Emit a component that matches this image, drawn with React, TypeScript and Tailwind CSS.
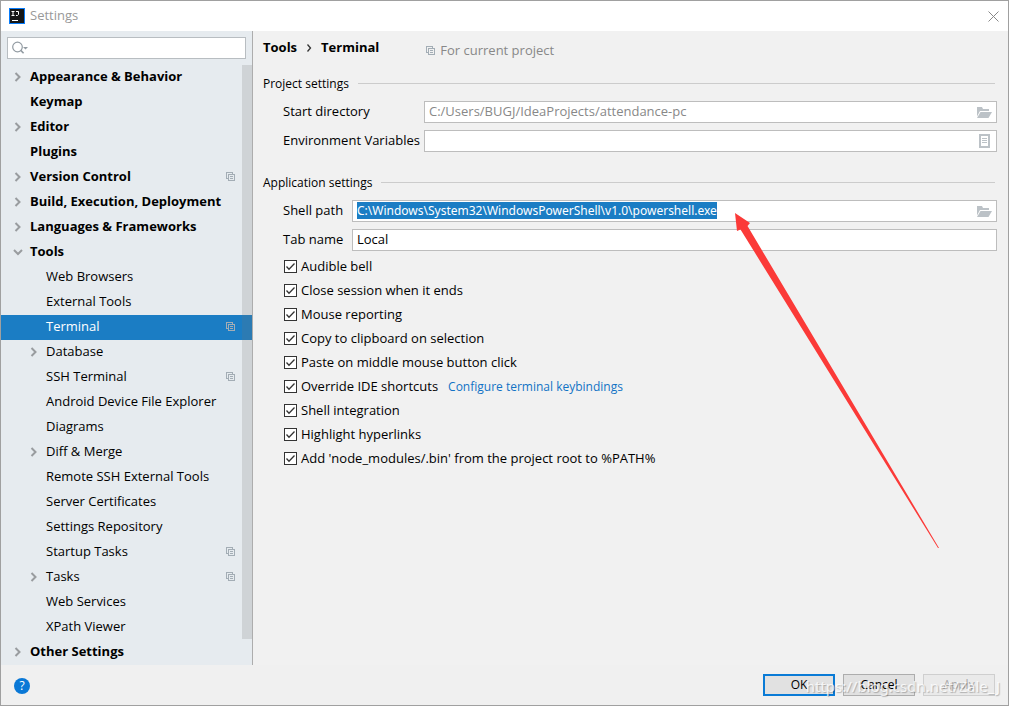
import { useEffect, useRef, useState } from "react";

type TreeItem = {
  label: string;
  level: 0 | 1;
  arrow?: "right" | "down";
  project?: boolean;
};

const treeItems: TreeItem[] = [
  { label: "Appearance & Behavior", level: 0, arrow: "right" },
  { label: "Keymap", level: 0 },
  { label: "Editor", level: 0, arrow: "right" },
  { label: "Plugins", level: 0 },
  { label: "Version Control", level: 0, arrow: "right", project: true },
  { label: "Build, Execution, Deployment", level: 0, arrow: "right" },
  { label: "Languages & Frameworks", level: 0, arrow: "right" },
  { label: "Tools", level: 0, arrow: "down" },
  { label: "Web Browsers", level: 1 },
  { label: "External Tools", level: 1 },
  { label: "Terminal", level: 1, project: true },
  { label: "Database", level: 1, arrow: "right" },
  { label: "SSH Terminal", level: 1, project: true },
  { label: "Android Device File Explorer", level: 1 },
  { label: "Diagrams", level: 1 },
  { label: "Diff & Merge", level: 1, arrow: "right" },
  { label: "Remote SSH External Tools", level: 1 },
  { label: "Server Certificates", level: 1 },
  { label: "Settings Repository", level: 1 },
  { label: "Startup Tasks", level: 1, project: true },
  { label: "Tasks", level: 1, arrow: "right", project: true },
  { label: "Web Services", level: 1 },
  { label: "XPath Viewer", level: 1 },
  { label: "Other Settings", level: 0, arrow: "right" },
];

const options = [
  "Audible bell",
  "Close session when it ends",
  "Mouse reporting",
  "Copy to clipboard on selection",
  "Paste on middle mouse button click",
  "Override IDE shortcuts",
  "Shell integration",
  "Highlight hyperlinks",
  "Add 'node_modules/.bin' from the project root to %PATH%",
];

const inputClass =
  "block h-[22px] w-full border border-[#bdbdbd] bg-white pr-7 pb-[2px] pl-1 leading-[17px] outline-none selection:bg-[#1b7dc4] selection:text-white";

const Chevron = ({ direction }: { direction: "right" | "down" }) => (
  <svg width="10" height="10" viewBox="0 0 10 10" fill="none" stroke="#999c9f" strokeWidth="2">
    {direction === "right" ? <path d="M2.5 1 L6.5 5 L2.5 9" /> : <path d="M1 3 L5 7 L9 3" />}
  </svg>
);

const ProjectIcon = () => (
  <svg width="10" height="10" viewBox="0 0 10 10" fill="none" stroke="#a3adb5" shapeRendering="crispEdges">
    <path d="M2 6.5 H0.5 V0.5 H6.5 V2" />
    <path d="M2.5 2.5 H8.5 V8.5 H2.5 Z" />
    <path d="M4 4.5 H7 M4 6.5 H7" />
  </svg>
);

const FolderIcon = () => (
  <svg width="16" height="12" viewBox="0 0 16 12" fill="#bcc2c7">
    <path d="M1 0 H6 L7 2 H13 V4 H4 L1 9.5 Z" />
    <path d="M4.5 5 H16 L12.5 11 H1 Z" />
  </svg>
);

const ListIcon = () => (
  <svg width="16" height="14" viewBox="0 0 16 14" fill="none" stroke="#bcc2c7" shapeRendering="crispEdges">
    <rect x="4" y="1" width="9" height="12" strokeWidth="2" />
    <path d="M6 4.5 H11 M6 6.5 H11 M6 8.5 H11" />
  </svg>
);

const GroupTitle = ({ children }: { children: string }) => (
  <h2 className="flex h-4 items-center gap-[9px] text-[12px]">
    <span className="pt-[2px] leading-4">{children}</span>
    <span className="mr-[2px] h-px flex-1 bg-[#cccccc]" />
  </h2>
);

const App = () => {
  const [selected, setSelected] = useState("Terminal");
  const [startDir, setStartDir] = useState("C:/Users/BUGJ/IdeaProjects/attendance-pc");
  const [env, setEnv] = useState("");
  const [shellPath, setShellPath] = useState("C:\\Windows\\System32\\WindowsPowerShell\\v1.0\\powershell.exe");
  const [tabName, setTabName] = useState("Local");
  const shellRef = useRef<HTMLInputElement>(null);

  // Shell path gets the focus with its whole text selected
  useEffect(() => {
    shellRef.current?.focus();
    shellRef.current?.select();
  }, []);

  return (
    <div className="flex min-h-screen flex-col border border-[#a0a0a0] bg-[#f0f0f0] font-['Open_Sans','Noto_Sans',sans-serif] text-[13px] text-black">
      <header className="flex h-[30px] items-center bg-white px-2">
        <svg width="16" height="16" viewBox="0 0 16 16">
          <rect width="16" height="16" fill="#087cfa" />
          <rect x="1" y="1" width="14" height="14" fill="#161616" />
          <path d="M2.5 3.5 H5.5 M4 3.5 V7.5 M2.5 7.5 H5.5 M7 3.5 H9.5 V6.5 L8.5 7.5 H7 M3 12.5 H9" fill="none" stroke="#fff" />
        </svg>
        <h1 className="ml-[5px] flex-1 text-[13px] text-[#999999]">Settings</h1>
        <button type="button" aria-label="Close" className="mr-px">
          <svg width="11" height="11" viewBox="0 0 11 11" stroke="#888888">
            <path d="M0.5 0.5 L10.5 10.5 M10.5 0.5 L0.5 10.5" />
          </svg>
        </button>
      </header>

      <div className="flex flex-1">
        <aside className="w-[252px] shrink-0 border-r border-[#adadad] bg-[#e6ebef]">
          <div className="mx-[6px] my-[6px] flex h-[22px] items-center border border-[#b8bdc1] bg-white pl-1">
            <svg width="17" height="14" viewBox="0 0 17 14" fill="none" stroke="#929ba2">
              <circle cx="5.5" cy="6" r="4.8" strokeWidth="1.2" />
              <path d="M8.8 9.4 L11.6 12.2" strokeWidth="1.6" />
              <path d="M11 6 H16 L13.5 8.5 Z" fill="#929ba2" stroke="none" />
            </svg>
            <input type="text" aria-label="Search settings" className="min-w-0 flex-1 bg-transparent px-1 outline-none" />
          </div>
          <nav className="relative">
            {treeItems.map((item) => {
              const active = item.label === selected;
              return (
                <button
                  key={item.label}
                  type="button"
                  onClick={() => setSelected(item.label)}
                  className={`flex h-[25px] w-full items-center pr-4 pb-[2px] text-left ${item.level ? "pl-[28px]" : "pl-3 font-bold"} ${active ? "bg-[#1b7dc4] text-white" : ""}`}
                >
                  <span className="flex w-[17px] shrink-0">{item.arrow && <Chevron direction={item.arrow} />}</span>
                  <span className="flex-1 whitespace-nowrap">{item.label}</span>
                  {item.project && <ProjectIcon />}
                </button>
              );
            })}
            <div className="absolute top-0 right-0 bottom-[26px] w-[10px] bg-[#737373]/20" />
          </nav>
        </aside>

        <main className="relative min-w-0 flex-1 bg-[#f1f1f1] pr-[11px] pl-[10px]">
          <div className="flex h-[34px] items-center font-bold">
            <span>Tools</span>
            <svg className="mx-2" width="8" height="8" viewBox="0 0 8 8" fill="none" stroke="#333333" strokeWidth="1.3">
              <path d="M2.5 0.5 L5.5 4 L2.5 7.5" />
            </svg>
            <span>Terminal</span>
            <span className="mt-[6px] ml-[47px] flex items-center gap-1 font-normal text-[#888888]">
              <ProjectIcon />
              For current project
            </span>
          </div>

          <section className="mt-[10px]">
            <GroupTitle>Project settings</GroupTitle>
            <div className="mt-[10px] grid grid-cols-[141px_1fr] items-center gap-y-[7px] pl-5">
              <label htmlFor="start-dir">Start directory</label>
              <div className="relative">
                <input id="start-dir" className={`${inputClass} text-[#888888]`} value={startDir} onChange={(e) => setStartDir(e.target.value)} />
                <button type="button" aria-label="Browse start directory" className="absolute top-[6px] right-[5px]">
                  <FolderIcon />
                </button>
              </div>
              <label htmlFor="env">Environment Variables</label>
              <div className="relative">
                <input id="env" className={inputClass} value={env} onChange={(e) => setEnv(e.target.value)} />
                <button type="button" aria-label="Edit variables" className="absolute top-1 right-[5px]">
                  <ListIcon />
                </button>
              </div>
            </div>
          </section>

          <section className="mt-[22px]">
            <GroupTitle>Application settings</GroupTitle>
            <div className="mt-[10px] grid grid-cols-[69px_1fr] items-center gap-y-[7px] pl-5">
              <label htmlFor="shell-path">Shell path</label>
              <div className="relative">
                <input
                  id="shell-path"
                  ref={shellRef}
                  className={`${inputClass} font-['Noto_Sans',sans-serif] text-[12px]`}
                  value={shellPath}
                  onChange={(e) => setShellPath(e.target.value)}
                />
                <button type="button" aria-label="Browse shell path" className="absolute top-[6px] right-[5px]">
                  <FolderIcon />
                </button>
              </div>
              <label htmlFor="tab-name">Tab name</label>
              <input id="tab-name" className={inputClass} value={tabName} onChange={(e) => setTabName(e.target.value)} />
            </div>
            <ul className="mt-1 pl-[21px]">
              {options.map((option) => (
                <li key={option} className="flex h-6 items-center">
                  <label className="flex items-center gap-1">
                    <span className="relative mb-px flex">
                      <input type="checkbox" defaultChecked className="peer size-[13px] appearance-none border border-[#333333] bg-white" />
                      <svg className="pointer-events-none absolute inset-0 hidden peer-checked:block" width="13" height="13" viewBox="0 0 13 13" fill="none" stroke="#333333" strokeWidth="1.3">
                        <path d="M2.5 6.5 L5 9.2 L10.5 3.5" />
                      </svg>
                    </span>
                    {option}
                  </label>
                  {option === "Override IDE shortcuts" && (
                    <a href="#keybindings" className="ml-[10px] text-[12px] text-[#1273c5]">
                      Configure terminal keybindings
                    </a>
                  )}
                </li>
              ))}
            </ul>
          </section>

          {/* callout arrow pointing at the shell path */}
          <svg className="pointer-events-none absolute top-[182px] left-[482px]" width="205" height="336" viewBox="0 0 205 336" fill="#fb3a38">
            <path d="M0 0 L15 10 L12.5 13 L204 335 L203 335 L5.5 16.5 L2 18 Z" />
          </svg>
        </main>
      </div>

      <footer className="relative flex h-10 items-center gap-2 pr-[13px] pl-[13px]">
        <button type="button" aria-label="Help" className="mt-px mr-auto flex size-4 items-center justify-center rounded-full bg-[#0a78d6] text-[12px] leading-4 text-white">
          ?
        </button>
        <button type="button" className="h-[22px] w-[72px] border-2 border-[#0a7bd6] bg-[#e1e1e1] text-[12px] leading-4">
          OK
        </button>
        <button type="button" className="h-[22px] w-[72px] border border-[#adadad] bg-[#e1e1e1] text-[12px] leading-4">
          Cancel
        </button>
        <button type="button" disabled className="h-[22px] w-[72px] border border-[#cfcfcf] bg-[#eaeaea] text-[12px] leading-4 text-[#a8a8a8]">
          Apply
        </button>
        <span className="pointer-events-none absolute top-[11px] right-2 font-['Noto_Sans',sans-serif] text-[15px] leading-5 text-white/80 [text-shadow:1px_1px_1px_rgba(0,0,0,0.25)]">
          https://blog.csdn.net/Zale_J
        </span>
      </footer>
    </div>
  );
};

export default App;
